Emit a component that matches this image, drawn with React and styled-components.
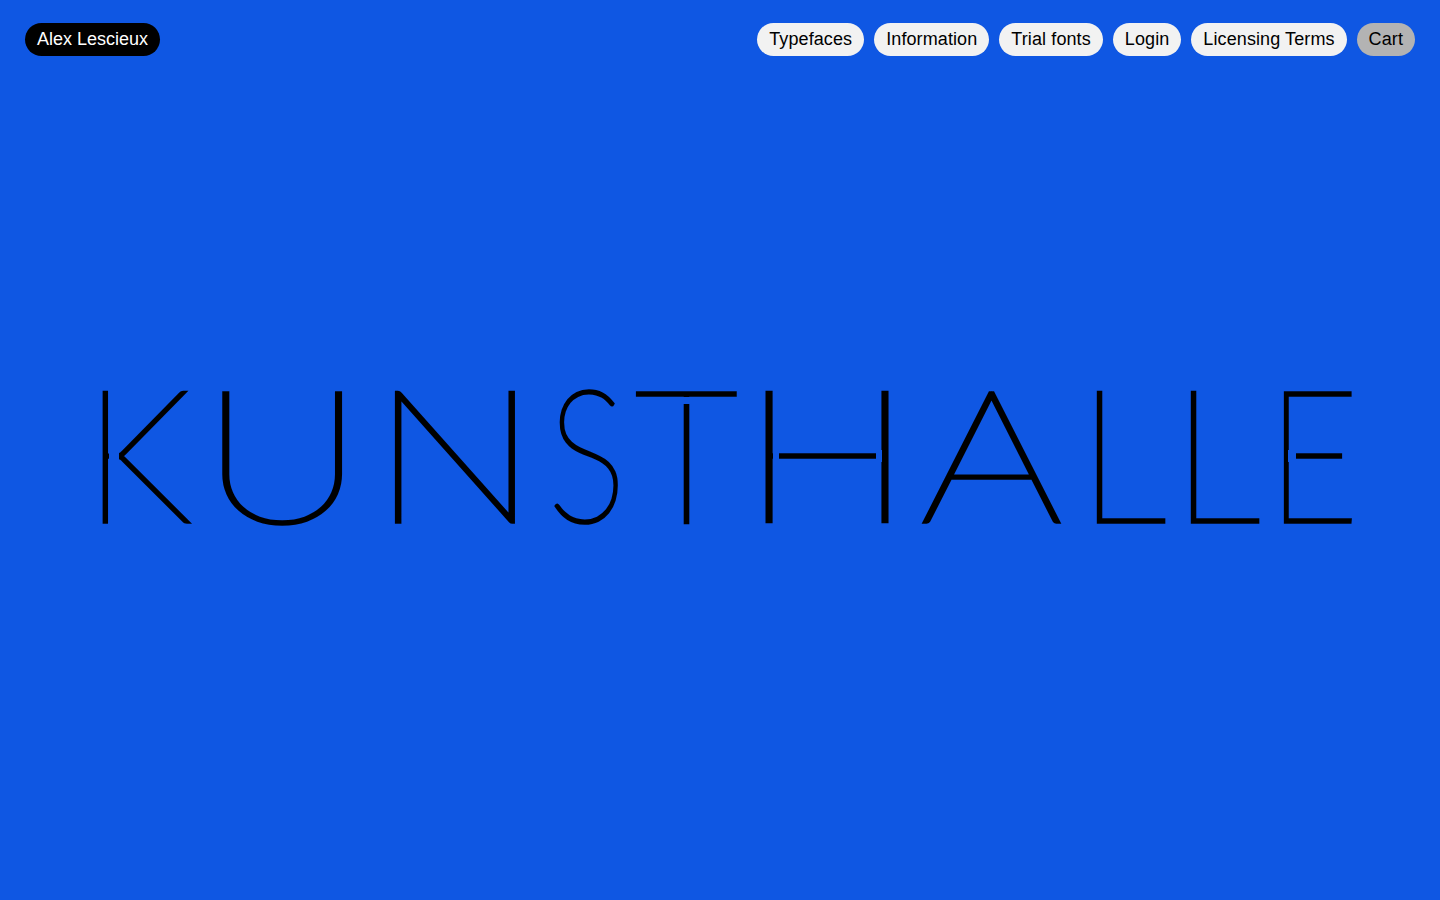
import React from "react";
import styled, { createGlobalStyle } from "styled-components";

const BLUE = "#0f57e3";

const GlobalStyle = createGlobalStyle`
  html, body { margin: 0; height: 100%; background: ${BLUE}; }
  #root { height: 100%; }
`;

const navItems = ["Typefaces", "Information", "Trial fonts", "Login", "Licensing Terms"];

// advance and horizontal stretch per letter, the display cut is much wider than Lato.
// notches open the small gaps the display cut has where strokes meet: [left, top, w, h]
const letters = [
  { ch: "K", adv: 116, scale: 0.95, notches: [[25, 91, 10, 12]] },
  { ch: "U", adv: 171, scale: 1.24 },
  { ch: "N", adv: 177, scale: 1.22 },
  { ch: "S", adv: 87, scale: 0.8 },
  { ch: "T", adv: 106, scale: 0.98, notches: [[45, 38, 15, 7]] },
  { ch: "H", adv: 179, scale: 1.25, notches: [[32, 91, 6, 12], [135, 91, 6, 12]] },
  { ch: "A", adv: 158, scale: 1.22 },
  { ch: "L", adv: 94, scale: 0.96 },
  { ch: "L", adv: 95, scale: 0.96 },
  { ch: "E", adv: 100, scale: 0.86, notches: [[21, 91, 8, 12]] },
];

export default function App() {
  return (
    <>
      <GlobalStyle />
      <Page>
        <Header>
          <Brand>Alex Lescieux</Brand>
          <Nav>
            {navItems.map((item) => (
              <Pill key={item}>{item}</Pill>
            ))}
            <Pill $muted>Cart</Pill>
          </Nav>
        </Header>
        <Stage>
          <Word>
            {letters.map((l, i) => (
              <Letter key={i} $adv={l.adv}>
                <Glyph $scale={l.scale}>{l.ch}</Glyph>
                {l.notches &&
                  l.notches.map(([left, top, w, h]) => (
                    <Notch key={left} $left={left} $top={top} $w={w} $h={h} />
                  ))}
              </Letter>
            ))}
          </Word>
        </Stage>
      </Page>
    </>
  );
}

const Page = styled.div`
  height: 900px;
  display: flex;
  flex-direction: column;
  font-family: "Liberation Sans", Arial, sans-serif;
  overflow: hidden;
`;

const Header = styled.header`
  display: flex;
  justify-content: space-between;
  padding: 23px 25px 0;
`;

const Brand = styled.a`
  height: 33px;
  padding: 0 12px;
  display: flex;
  align-items: center;
  border-radius: 17px;
  background: #000;
  color: #fff;
  font-size: 18px;
`;

const Nav = styled.nav`
  display: flex;
  gap: 10px;
`;

const Pill = styled.a`
  height: 33px;
  padding: 0 12px;
  display: flex;
  align-items: center;
  border-radius: 17px;
  background: ${(p) => (p.$muted ? "#b3b3b3" : "#f2f2f2")};
  color: #000;
  font-size: 18px;
  letter-spacing: 0.1px;
`;

const Stage = styled.main`
  flex: 1;
  display: flex;
  align-items: center;
  padding: 0 0 54px 84px;
`;

const Word = styled.h1`
  margin: 0;
  display: flex;
  font-family: "Lato", sans-serif;
  font-weight: 100;
  font-size: 184px;
  line-height: 1;
  color: #000;
  -webkit-text-stroke: 3.5px #000;
  white-space: nowrap;
`;

const Letter = styled.span`
  display: block;
  position: relative;
  width: ${(p) => p.$adv}px;
`;

const Glyph = styled.span`
  display: inline-block;
  transform: scaleX(${(p) => p.$scale});
  transform-origin: 0 50%;
`;

const Notch = styled.i`
  position: absolute;
  left: ${(p) => p.$left}px;
  top: ${(p) => p.$top}px;
  width: ${(p) => p.$w}px;
  height: ${(p) => p.$h}px;
  background: ${BLUE};
`;
